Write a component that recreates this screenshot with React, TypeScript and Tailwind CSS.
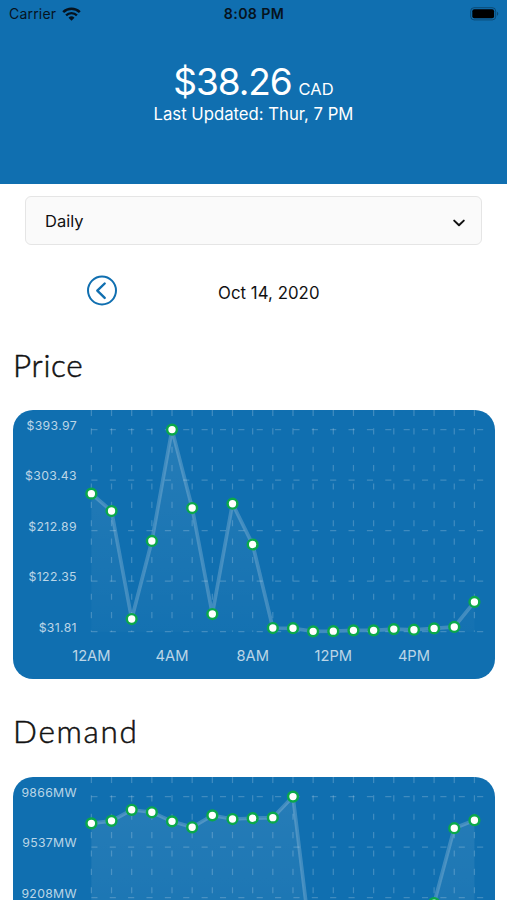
import React from "react";

type ChartProps = {
  id: string;
  data: number[];
  max: number;
  min: number;
  yLabels: string[];
  xLabels: string[];
};

const WIDTH = 393.3;
const HEIGHT = 220;
const PADDING_TOP = 16;
const PADDING_LEFT = 64;
const PLOT_HEIGHT = HEIGHT * 0.75;

const priceData = [
  279.1, 248, 54.4, 194.3, 393.97, 253.4, 63.4, 261.1, 188, 38.3, 37.9, 32.4,
  32.6, 34.2, 34.2, 36.4, 35.2, 37.6, 40.2, 85,
];

const demandData = [
  9692, 9708, 9780, 9764, 9705, 9666, 9744, 9720, 9725, 9729, 9866, 8793, 8640,
  8550, 8560, 8610, 8720, 9172, 9660, 9712,
];

const hours = ["12AM", "4AM", "8AM", "12PM", "4PM"];

const LineChart = ({ id, data, max, min, yLabels, xLabels }: ChartProps) => {
  const step = (WIDTH - PADDING_LEFT) / data.length;
  const bottom = PADDING_TOP + PLOT_HEIGHT;
  const points = data.map((value, i) => ({
    x: PADDING_LEFT + i * step,
    y: PADDING_TOP + ((max - value) / (max - min)) * PLOT_HEIGHT,
  }));
  const line = points.map((p) => `${p.x},${p.y}`).join(" ");
  const lastX = points[points.length - 1].x;

  return (
    <svg
      viewBox={`0 0 ${WIDTH} ${HEIGHT}`}
      className="block h-[269.4px] w-[481.6px] rounded-[20px] bg-[#106fb0] font-['Inter',sans-serif]"
    >
      <defs>
        <linearGradient id={id} x1="0" y1="0" x2="0" y2={HEIGHT} gradientUnits="userSpaceOnUse">
          <stop offset="0" stopColor="#fff" stopOpacity="0.1" />
          <stop offset="1" stopColor="#fff" stopOpacity="0" />
        </linearGradient>
      </defs>

      <g stroke="#fff" strokeOpacity="0.2" strokeWidth="1" strokeDasharray="5 10">
        {yLabels.map((label, i) => {
          const y = PADDING_TOP + (PLOT_HEIGHT / 4) * i;
          return <line key={label} x1={PADDING_LEFT} x2={WIDTH} y1={y} y2={y} />;
        })}
        {points.map((p) => (
          <line key={p.x} x1={p.x} x2={p.x} y1={0} y2={bottom} />
        ))}
      </g>

      <g fill="#fff" fillOpacity="0.72">
        {yLabels.map((label, i) => (
          <text
            key={label}
            x={52.2}
            y={PADDING_TOP + (PLOT_HEIGHT / 4) * i + 0.3}
            textAnchor="end"
            fontSize="10"
            letterSpacing="0.28"
          >
            {label}
          </text>
        ))}
        {xLabels.map((label, i) => (
          <text
            key={label}
            x={PADDING_LEFT + i * 4 * step}
            y={205}
            textAnchor="middle"
            fontSize="12"
          >
            {label}
          </text>
        ))}
      </g>

      <polyline points={line} fill="none" stroke="#fff" strokeOpacity="0.2" strokeWidth="3" />
      <polygon
        points={`${line} ${lastX},${bottom} ${PADDING_LEFT},${bottom}`}
        fill={`url(#${id})`}
      />
      {points.map((p) => (
        <circle key={p.x} cx={p.x} cy={p.y} r="4" fill="#fff" stroke="#0ba84a" strokeWidth="2" />
      ))}
    </svg>
  );
};

const StatusBar = () => (
  <div className="grid h-[27px] grid-cols-3 items-center pl-[8px] pr-[7px] text-[#06131e]">
    <div className="flex items-center gap-[6px] pl-px">
      <span className="text-[14px] tracking-[0.2px]">Carrier</span>
      <svg width="19" height="14" viewBox="0 0 19 14" fill="none" stroke="currentColor">
        <path d="M1.2 5.1a12 12 0 0 1 16.6 0" strokeWidth="2.6" />
        <path d="M4.1 8.3a7.8 7.8 0 0 1 10.8 0" strokeWidth="2.4" />
        <path d="M9.5 13.7 6.5 10.7a4.3 4.3 0 0 1 6 0z" fill="currentColor" stroke="none" />
      </svg>
    </div>
    <span className="text-center text-[14.2px] font-semibold tracking-[0.35px]">8:08 PM</span>
    <svg className="justify-self-end" width="30" height="14" viewBox="0 0 30 14">
      <rect x="0.7" y="0.7" width="25" height="12.2" rx="3.4" fill="none" stroke="#06131e" strokeOpacity="0.4" />
      <rect x="2.3" y="2.3" width="21.8" height="9" rx="2" fill="#000" />
      <path d="M27 4.8v4a2.2 2.2 0 0 0 0-4z" fill="#06131e" fillOpacity="0.4" />
    </svg>
  </div>
);

const App = () => {
  return (
    <div className="h-screen w-[507px] overflow-hidden bg-white font-['Inter',sans-serif] text-[#111]">
      <header className="h-[184px] bg-[#106fb0]">
        <StatusBar />
        <div className="pt-[33px] text-center text-white">
          <p className="h-[44px] text-[37px] leading-[44px]">
            <span className="tracking-[-1.1px]">$38.26</span>
            <span className="ml-[7px] text-[16.5px]">CAD</span>
          </p>
          <p className="text-[16.7px] leading-[21px]">Last Updated: Thur, 7 PM</p>
        </div>
      </header>

      <div className="mx-[25px] mt-[12px] flex h-[49px] items-center justify-between rounded-[6px] border-[1.5px] border-[#e5e5e5] bg-[#fafafa] pl-[19px] pr-[15px]">
        <span className="mt-px text-[16.5px]">Daily</span>
        <svg className="mt-1" width="14" height="10" viewBox="0 0 14 10" fill="none" stroke="#111" strokeWidth="2">
          <path d="m2.2 2.6 4.8 4.6 4.8-4.6" strokeLinecap="round" strokeLinejoin="round" />
        </svg>
      </div>

      <div className="mt-[30px] flex h-8 items-center pl-[86px]">
        <svg width="32" height="32" viewBox="0 0 32 32" fill="none" stroke="#106fb0">
          <circle cx="16" cy="15.5" r="14" strokeWidth="2" />
          <path d="m18.7 8.5-7.4 7.2 7.4 7.2" strokeWidth="2.4" strokeLinecap="round" strokeLinejoin="round" />
        </svg>
        <span className="ml-[100px] mt-[5px] text-[16.8px] tracking-[0.05px]">Oct 14, 2020</span>
      </div>

      <section className="mt-[38px] pl-[13px]">
        <h2 className="h-[65px] font-['Lato',sans-serif] text-[31.5px] font-light leading-[40px] tracking-[0.7px] [-webkit-text-stroke:0.5px_#111]">
          Price
        </h2>
        <LineChart
          id="price-fill"
          data={priceData}
          max={393.97}
          min={31.81}
          yLabels={["$393.97", "$303.43", "$212.89", "$122.35", "$31.81"]}
          xLabels={hours}
        />
      </section>

      <section className="mt-[31.2px] pl-[13px]">
        <h2 className="h-[66px] font-['Lato',sans-serif] text-[31.5px] font-light leading-[40px] tracking-[1.7px] [-webkit-text-stroke:0.5px_#111]">
          Demand
        </h2>
        <LineChart
          id="demand-fill"
          data={demandData}
          max={9866}
          min={8550}
          yLabels={["9866MW", "9537MW", "9208MW", "8879MW", "8550MW"]}
          xLabels={hours}
        />
      </section>
    </div>
  );
};

export default App;
